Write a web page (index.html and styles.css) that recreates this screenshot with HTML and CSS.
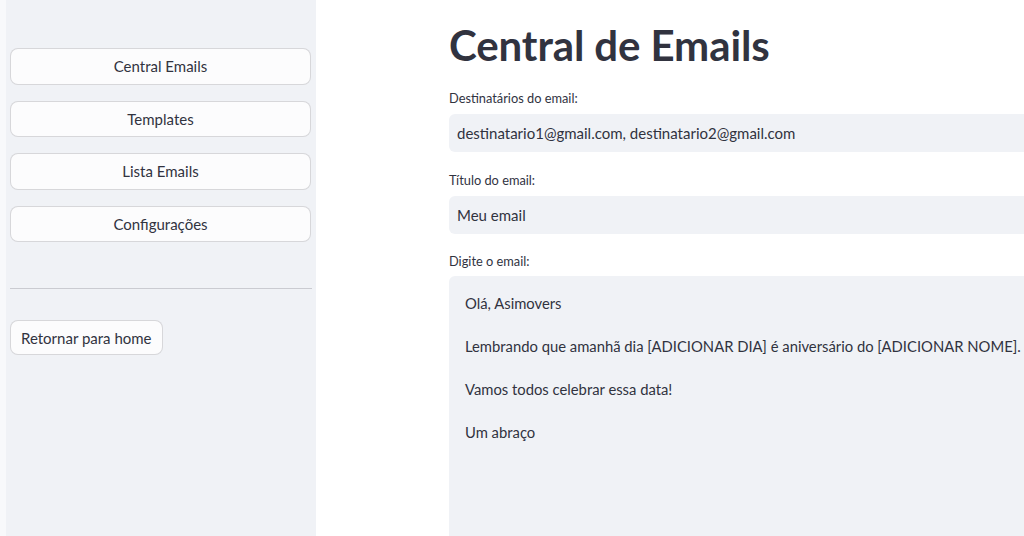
FILE: index.html
```html
<!DOCTYPE html>
<html lang="pt-BR">
<head>
    <meta charset="UTF-8">
    <meta name="viewport" content="width=device-width, initial-scale=1.0">
    <title>Central de Emails</title>
    <link rel="stylesheet" href="styles.css">
</head>
<body>
    <aside class="sidebar">
        <div class="menu">
            <button class="menu-button">Central Emails</button>
            <button class="menu-button">Templates</button>
            <button class="menu-button">Lista Emails</button>
            <button class="menu-button">Configurações</button>
        </div>
        <hr class="divider">
        <button class="home-button">Retornar para home</button>
    </aside>

    <main class="content">
        <h1>Central de Emails</h1>

        <div class="field">
            <label class="field-label">Destinatários do email:</label>
            <div class="input">destinatario1@gmail.com, destinatario2@gmail.com</div>
        </div>

        <div class="field">
            <label class="field-label">Título do email:</label>
            <div class="input">Meu email</div>
        </div>

        <div class="field field-text">
            <label class="field-label">Digite o email:</label>
            <div class="textarea">
                <p>Olá, Asimovers</p>
                <p>Lembrando que amanhã dia [ADICIONAR DIA] é aniversário do [ADICIONAR NOME].</p>
                <p>Vamos todos celebrar essa data!</p>
                <p>Um abraço</p>
            </div>
        </div>
    </main>
</body>
</html>
```

FILE: styles.css
```css
body {
    font-family: Lato, "Noto Sans", sans-serif;
    margin: 0;
    padding: 0 0 0 6px;
    background-color: #f8f9fb;
    color: #31333f;
    display: flex;
    height: 536px;
    overflow: hidden;
}

/* Barra lateral */
.sidebar {
    width: 310px;
    flex-shrink: 0;
    background-color: #f0f2f6;
    padding: 48px 5px 0 4px;
    box-sizing: border-box;
}

.menu {
    display: flex;
    flex-direction: column;
    gap: 16px;
}

.menu-button,
.home-button {
    font-family: inherit;
    font-size: 15px;
    color: #31333f;
    background-color: #fcfcfd;
    border: 1px solid rgba(49, 51, 63, 0.18);
    border-radius: 8px;
    height: 36.5px;
    cursor: pointer;
}

.menu-button {
    width: 100%;
}

.divider {
    border: none;
    border-top: 1px solid rgba(49, 51, 63, 0.2);
    margin: 46px 0 31px 0;
    width: 302px;
}

.home-button {
    padding: 0 10px;
    height: 35px;
}

/* Conteúdo principal */
.content {
    flex: 1;
    background-color: #fff;
    padding: 0 0 0 133px;
    min-width: 0;
    overflow: hidden;
}

h1 {
    font-size: 42px;
    font-weight: 700;
    margin: 22px 0 22px 0;
    line-height: 46px;
    letter-spacing: -0.1px;
}

.field {
    margin-bottom: 20px;
}

.field-label {
    display: block;
    font-size: 12.8px;
    line-height: 16px;
    margin-bottom: 8px;
}

.field-text {
    margin-top: -1px;
}

.field-text .field-label {
    margin-bottom: 7px;
}

.input {
    background-color: #f0f2f6;
    border-radius: 6px 0 0 6px;
    height: 38px;
    line-height: 38px;
    padding: 0 8px;
    font-size: 15px;
    white-space: nowrap;
}

.textarea {
    background-color: #f0f2f6;
    border-radius: 6px 0 0 0;
    height: 262px;
    box-sizing: border-box;
    padding: 17px 16px;
    font-size: 14.8px;
    line-height: 21.5px;
    white-space: nowrap;
}

.textarea p {
    margin: 0 0 21.5px 0;
}
```
